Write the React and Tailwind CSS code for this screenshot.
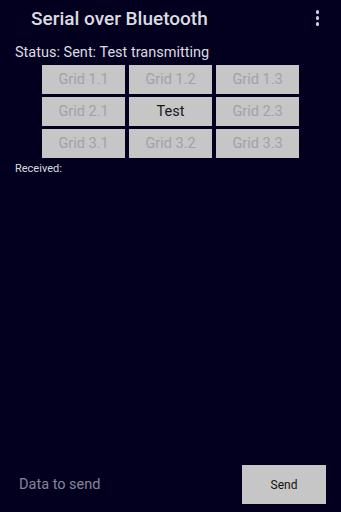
const rows = [
  ["Grid 1.1", "Grid 1.2", "Grid 1.3"],
  ["Grid 2.1", "Test", "Grid 2.3"],
  ["Grid 3.1", "Grid 3.2", "Grid 3.3"],
];

export default function App() {
  return (
    <div
      className="w-[341px] h-[512px] bg-[#03001f] flex flex-col overflow-hidden"
      style={{ fontFamily: "Roboto, 'Liberation Sans', sans-serif" }}
    >
      {/* app bar */}
      <div className="h-[36px] flex items-center justify-between pl-[31px] pr-[22px]">
        <span className="text-[19px] font-medium text-[#dcdce0] leading-none">
          Serial over Bluetooth
        </span>
        <div className="flex flex-col gap-[2.5px] items-center">
          <span className="w-[3.5px] h-[3.5px] rounded-full bg-[#d0d0d8]" />
          <span className="w-[3.5px] h-[3.5px] rounded-full bg-[#d0d0d8]" />
          <span className="w-[3.5px] h-[3.5px] rounded-full bg-[#d0d0d8]" />
        </div>
      </div>

      <div className="px-[15px] pt-[8px] text-[14.5px] leading-[18px] text-[#dcdce0]">
        Status: Sent: Test transmitting
      </div>

      <div className="pl-[42px] pt-[3px] flex flex-col gap-[3px]">
        {rows.map((row, i) => (
          <div key={i} className="flex gap-[4px]">
            {row.map((label) => (
              <div
                key={label}
                className={`w-[83px] h-[29px] bg-[#c6c6c6] flex items-center justify-center text-[14.5px] ${
                  label === "Test" ? "text-[#1a1a1a]" : "text-[#a2a2a2]"
                }`}
              >
                {label}
              </div>
            ))}
          </div>
        ))}
      </div>

      <div className="px-[15px] pt-[3px] text-[11px] text-[#dcdce0]">Received:</div>

      <div className="flex-1" />

      <div className="flex items-center justify-between pl-[19px] pr-[15px] pb-[8px]">
        <span className="text-[14.5px] text-[#85859a]">Data to send</span>
        <div className="w-[84px] h-[39px] bg-[#c6c6c6] flex items-center justify-center text-[12px] text-[#111] shadow-[0_1px_1px_rgba(0,0,0,0.5)]">
          Send
        </div>
      </div>
    </div>
  );
}
